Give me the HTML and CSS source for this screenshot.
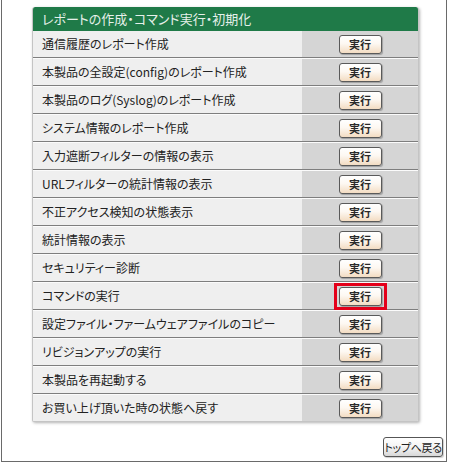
FILE: index.html
```html
<!DOCTYPE html>
<html lang="ja">
<head>
<meta charset="utf-8">
<link rel="stylesheet" href="styles.css">
</head>
<body>
<div class="frame">
  <div class="panel">
    <div class="panel-head">レポートの作成・コマンド実行・初期化</div>
    <div class="row"><div class="label">通信履歴のレポート作成</div><div class="action"><button class="btn">実行</button></div></div>
    <div class="row"><div class="label">本製品の全設定(config)のレポート作成</div><div class="action"><button class="btn">実行</button></div></div>
    <div class="row"><div class="label">本製品のログ(Syslog)のレポート作成</div><div class="action"><button class="btn">実行</button></div></div>
    <div class="row"><div class="label">システム情報のレポート作成</div><div class="action"><button class="btn">実行</button></div></div>
    <div class="row"><div class="label">入力遮断フィルターの情報の表示</div><div class="action"><button class="btn">実行</button></div></div>
    <div class="row"><div class="label">URLフィルターの統計情報の表示</div><div class="action"><button class="btn">実行</button></div></div>
    <div class="row"><div class="label">不正アクセス検知の状態表示</div><div class="action"><button class="btn">実行</button></div></div>
    <div class="row"><div class="label">統計情報の表示</div><div class="action"><button class="btn">実行</button></div></div>
    <div class="row"><div class="label">セキュリティー診断</div><div class="action"><button class="btn">実行</button></div></div>
    <div class="row"><div class="label">コマンドの実行</div><div class="action"><span class="highlight"><button class="btn">実行</button></span></div></div>
    <div class="row"><div class="label">設定ファイル・ファームウェアファイルのコピー</div><div class="action"><button class="btn">実行</button></div></div>
    <div class="row"><div class="label">リビジョンアップの実行</div><div class="action"><button class="btn">実行</button></div></div>
    <div class="row"><div class="label">本製品を再起動する</div><div class="action"><button class="btn">実行</button></div></div>
    <div class="row"><div class="label">お買い上げ頂いた時の状態へ戻す</div><div class="action"><button class="btn">実行</button></div></div>
  </div>
  <div class="footer"><button class="btn-top">トップへ戻る</button></div>
</div>
</body>
</html>
```

FILE: styles.css
```css
html, body {
  margin: 0;
  padding: 0;
  background: #ffffff;
}
body {
  font-family: "Noto Sans CJK JP", "Noto Sans", sans-serif;
  font-feature-settings: "palt";
  color: #222222;
}
.frame {
  margin-left: 1px;
  width: 446px;
  height: 462px;
  border-left: 1px solid #6a6a6a;
  border-right: 1px solid #6a6a6a;
  border-bottom: 1px solid #6a6a6a;
  padding: 7px 0 0 30px;
  box-sizing: border-box;
  display: flex;
  flex-direction: column;
}
.panel {
  width: 387px;
  border: 1px solid #c4c4c4;
  border-top: none;
  border-radius: 3px 3px 2px 2px;
  box-shadow: 1px 1px 3px rgba(0, 0, 0, 0.3);
  box-sizing: border-box;
  overflow: hidden;
  background: #efefef;
}
.panel-head {
  height: 24px;
  background: #1f7a48;
  color: #e6f0ea;
  font-size: 13px;
  line-height: 24px;
  padding-left: 10px;
  margin: 0 -1px;
  border-radius: 3px 3px 0 0;
}
.row {
  display: flex;
  height: 28px;
  box-sizing: border-box;
  border-top: 1px solid #fbfbfb;
  border-bottom: 1px solid #7e7e7e;
}
.panel-head + .row {
  border-top: none;
  height: 27px;
}
.row:last-child {
  border-bottom: none;
  height: 27px;
}
.label {
  flex: 1;
  background: #efefef;
  font-size: 12px;
  line-height: 26px;
  padding-left: 9px;
  white-space: nowrap;
}
.action {
  width: 116px;
  background: #d5d5d5;
  display: flex;
  align-items: center;
  justify-content: center;
}
.btn {
  display: block;
  width: 43px;
  height: 19px;
  padding: 0;
  border: 1px solid #5a5a5a;
  border-radius: 3px;
  background: linear-gradient(#ffffff 0%, #fdf8f2 45%, #f3dcc2 100%);
  font-family: "Noto Sans CJK JP", sans-serif;
  font-feature-settings: "palt";
  font-size: 11px;
  font-weight: bold;
  color: #2a2a2a;
  line-height: 17px;
  box-shadow: 1px 1px 1px rgba(0, 0, 0, 0.25);
}
.highlight {
  display: block;
  border: 3px solid #e4001a;
  padding: 1px 2px 1px 2px;
}
.footer {
  display: flex;
  justify-content: flex-end;
  margin-top: 15px;
  padding-right: 3px;
}
.btn-top {
  width: 60px;
  height: 20px;
  padding: 0;
  border: 1px solid #555555;
  border-radius: 3px;
  background: linear-gradient(#ffffff 0%, #f4f4f4 50%, #d8d8d8 100%);
  font-family: "Noto Sans CJK JP", sans-serif;
  font-feature-settings: "palt";
  font-size: 11px;
  letter-spacing: -0.3px;
  white-space: nowrap;
  color: #222222;
  line-height: 18px;
  box-shadow: 1px 1px 1px rgba(0, 0, 0, 0.2);
}
```
